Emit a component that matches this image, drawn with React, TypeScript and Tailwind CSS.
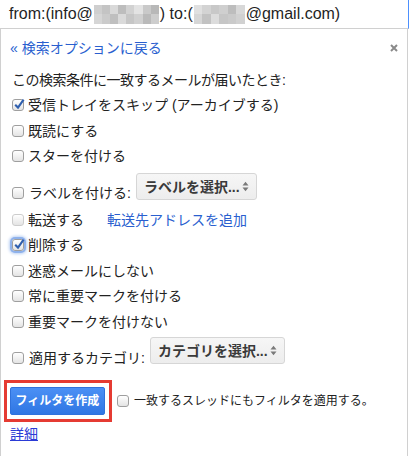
import React from "react";

const font = { fontFamily: '"Liberation Sans", Arial, "Noto Sans CJK JP", sans-serif' };

const mosaicA = [
  "bg-[#cfcfcf]", "bg-[#c4c4c4]", "bg-[#d9d9d9]", "bg-[#bdbdbd]", "bg-[#d2d2d2]", "bg-[#e3e3e3]", "bg-[#c9c9c9]", "bg-[#b8b8b8]",
  "bg-[#d6d6d6]", "bg-[#cbcbcb]", "bg-[#bfbfbf]", "bg-[#dadada]", "bg-[#c6c6c6]", "bg-[#d0d0d0]", "bg-[#bababa]", "bg-[#cdcdcd]",
];
const mosaicB = [
  "bg-[#e0e0e0]", "bg-[#d3d3d3]", "bg-[#c8c8c8]", "bg-[#cfcfcf]", "bg-[#bdbdbd]", "bg-[#d8d8d8]",
  "bg-[#d6d6d6]", "bg-[#c2c2c2]", "bg-[#dcdcdc]", "bg-[#c6c6c6]", "bg-[#cacaca]", "bg-[#d1d1d1]",
];

const Mosaic: React.FC<{ cells: string[]; cols: string; w: string }> = ({ cells, cols, w }) => (
  <span className={`grid ${cols} ${w} h-[19px] mx-[1px]`}>
    {cells.map((c, i) => (
      <span key={i} className={c} />
    ))}
  </span>
);

interface BoxProps {
  checked?: boolean;
  focus?: boolean;
  disabled?: boolean;
}

const Box: React.FC<BoxProps> = ({ checked, focus, disabled }) => (
  <span
    className={
      "relative inline-block h-[12px] w-[12px] shrink-0 rounded-[3px] border bg-gradient-to-b from-white to-[#e4e4e4] " +
      (disabled ? "border-[#cdcdcd]" : "border-[#9f9f9f]") +
      (focus ? " shadow-[0_0_0_2px_#8fb2ec,0_0_3px_3px_#bcd1f3]" : "")
    }
  >
    {checked && (
      <svg className="absolute -top-[2px] left-[0px]" width="13" height="13" viewBox="0 0 13 13">
        <path d="M2.2 6.8 L5 9.6 L10.6 1.6" fill="none" stroke="#2f5fae" strokeWidth="2.1" />
      </svg>
    )}
  </span>
);

const Row: React.FC<BoxProps & { label: string }> = ({ label, ...box }) => (
  <div className="flex h-[25.5px] items-center gap-[4px] pl-[11px]">
    <Box {...box} />
    <span>{label}</span>
  </div>
);

const Select: React.FC<{ text: string; w: string }> = ({ text, w }) => (
  <div
    className={`flex h-[27px] ${w} items-center justify-between rounded-[3px] border border-[#d6d6d6] bg-gradient-to-b from-[#f6f6f6] to-[#ededed] pl-[7px] pr-[7px] font-bold text-[#3a3a3a]`}
  >
    <span>{text}</span>
    <svg width="7" height="11" viewBox="0 0 7 11">
      <path d="M0.5 4.5 L3.5 0.8 L6.5 4.5 Z M0.5 6.5 L3.5 10.2 L6.5 6.5 Z" fill="#7a7a7a" />
    </svg>
  </div>
);

export default function App() {
  return (
    <div className="h-[456px] w-[409px] overflow-hidden bg-white text-[14px] leading-[20px] text-[#222]" style={font}>
      <div className="flex h-[29px] items-center border-b border-r border-b-[#d0d0d0] border-r-[#4d90fe] pl-[9px] text-[16px] text-[#1f1f1f]">
        <span>from:(info@</span>
        <Mosaic cells={mosaicA} cols="grid-cols-8" w="w-[65px]" />
        <span>) to:(</span>
        <Mosaic cells={mosaicB} cols="grid-cols-6" w="w-[51px]" />
        <span>@gmail.com)</span>
      </div>

      <div className="h-[427px] w-[408px] border-x border-[#d0d0d0]">
        <div className="flex h-[38px] items-center justify-between pl-[9px] pr-[9px] text-[#2a5fcf]">
          <span>« 検索オプションに戻る</span>
          <svg width="8" height="8" viewBox="0 0 8 8">
            <path d="M1 1 L7 7 M7 1 L1 7" stroke="#8a8a8a" strokeWidth="2" />
          </svg>
        </div>

        <div className="flex h-[25.5px] items-center pl-[11px] tracking-[-0.5px]">この検索条件に一致するメールが届いたとき:</div>
        <Row label="受信トレイをスキップ (アーカイブする)" checked />
        <Row label="既読にする" />
        <Row label="スターを付ける" />

        <div className="flex h-[38px] items-start pl-[11px]">
          <div className="mt-[14px] flex items-center gap-[5px]">
            <Box />
            <span>ラベルを付ける:</span>
          </div>
          <div className="ml-[5px] mt-[4px]">
            <Select text="ラベルを選択..." w="w-[121px]" />
          </div>
        </div>

        <div className="flex h-[25.5px] items-center gap-[4px] pl-[11px]">
          <Box disabled />
          <span>転送する</span>
          <span className="ml-[19px] text-[#2a5fcf]">転送先アドレスを追加</span>
        </div>
        <Row label="削除する" checked focus />
        <Row label="迷惑メールにしない" />
        <Row label="常に重要マークを付ける" />
        <Row label="重要マークを付けない" />

        <div className="flex h-[37.5px] items-start pl-[11px]">
          <div className="mt-[13.5px] flex items-center gap-[5px]">
            <Box />
            <span>適用するカテゴリ:</span>
          </div>
          <div className="ml-[5px] mt-[2.5px]">
            <Select text="カテゴリを選択..." w="w-[135px]" />
          </div>
        </div>

        <div className="mt-[8px] flex items-center pl-[3px]">
          <div className="border-[3px] border-[#e53b32] py-[4px] pl-[3px] pr-[4px]">
            <div className="flex h-[28px] w-[95px] items-center justify-center rounded-[2px] border border-[#2f72dc] bg-gradient-to-b from-[#4b90f5] to-[#2f76e3] text-[12px] font-bold text-white">
              フィルタを作成
            </div>
          </div>
          <div className="ml-[5px] flex items-center gap-[5px] text-[12px]">
            <Box />
            <span>一致するスレッドにもフィルタを適用する。</span>
          </div>
        </div>

        <div className="mt-[2px] pl-[9px]">
          <span className="text-[#2b3bd6] underline">詳細</span>
        </div>
      </div>
    </div>
  );
}
